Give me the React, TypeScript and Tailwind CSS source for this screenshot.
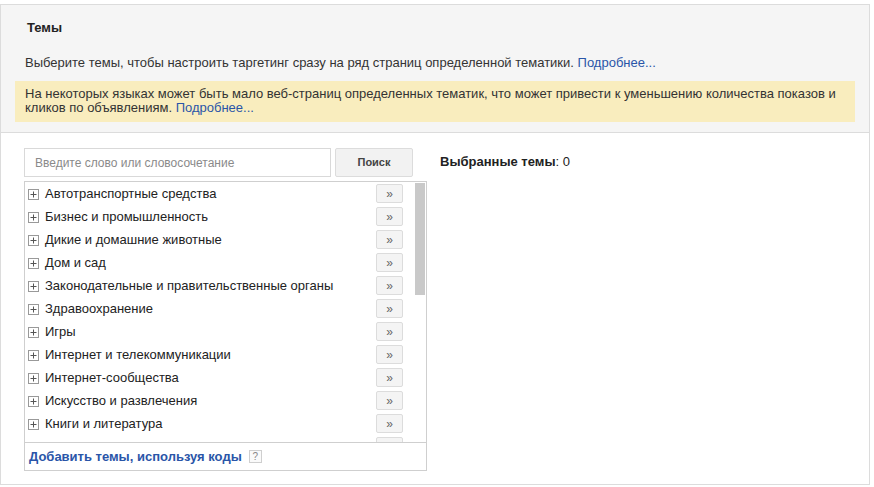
import React from "react";

const topics = [
  "Автотранспортные средства",
  "Бизнес и промышленность",
  "Дикие и домашние животные",
  "Дом и сад",
  "Законодательные и правительственные органы",
  "Здравоохранение",
  "Игры",
  "Интернет и телекоммуникации",
  "Интернет-сообщества",
  "Искусство и развлечения",
  "Книги и литература",
  "Компьютеры и электроника",
];

function PlusBox() {
  return (
    <svg width="11" height="11" viewBox="0 0 11 11" className="shrink-0 mt-[2px]">
      <rect x="0.5" y="0.5" width="10" height="10" fill="#fff" stroke="#999" />
      <path d="M2.5 5.5h6M5.5 2.5v6" stroke="#555" strokeWidth="1" />
    </svg>
  );
}

export default function App() {
  return (
    <div
      className="w-[874px] h-[487px] bg-white text-[13px] text-[#222] pt-[4px]"
      style={{ fontFamily: '"Liberation Sans", Arial, sans-serif' }}
    >
      <div className="w-[870px] h-[481px] border border-[#dcdcdc] flex flex-col">
        <div className="bg-[#f5f5f5] border-b border-[#dcdcdc] h-[128px] shrink-0 pt-[15px] px-[14px]">
          <div className="pl-[12px] font-bold leading-[16px] text-[#222]">Темы</div>
          <div className="pl-[10px] mt-[19px] leading-[16px] text-[#333]">
            Выберите темы, чтобы настроить таргетинг сразу на ряд страниц определенной тематики.{" "}
            <span className="text-[#2a55a8]">Подробнее...</span>
          </div>
          <div className="mt-[10px] bg-[#f9edbe] h-[41px] pl-[10px] pr-[10px] pt-[6px] leading-[14px] text-[#333]">
            На некоторых языках может быть мало веб-страниц определенных тематик, что может привести к уменьшению количества показов и кликов по объявлениям.{" "}
            <span className="text-[#2a55a8]">Подробнее...</span>
          </div>
        </div>
        <div className="flex-1 flex pt-[15px] pl-[23px] gap-[13px]">
          <div className="w-[403px] flex flex-col">
            <div className="flex gap-[4px] h-[29px]">
              <div className="w-[307px] border border-[#d9d9d9] bg-white flex items-center pl-[10px] text-[12px] text-[#8a8a8a]">
                Введите слово или словосочетание
              </div>
              <div className="w-[78px] border border-[#dcdcdc] rounded-[2px] bg-[#f2f2f2] flex items-center justify-center text-[11px] font-bold text-[#444]">
                Поиск
              </div>
            </div>
            <div className="mt-[4px] h-[290px] border border-[#cfcfcf] flex flex-col">
              <div className="h-[261px] flex overflow-hidden border-b border-[#cfcfcf]">
                <div className="flex-1 flex flex-col overflow-hidden">
                  {topics.map((t) => (
                    <div key={t} className="h-[23px] shrink-0 flex items-center pl-[3px] pr-[12px]">
                      <PlusBox />
                      <span className="ml-[6px] flex-1 leading-[16px] text-[#222]">{t}</span>
                      <div className="w-[27px] h-[19px] border border-[#dcdcdc] rounded-[2px] bg-[#f4f4f4] flex items-center justify-center text-[12px] text-[#666] leading-none">
                        »
                      </div>
                    </div>
                  ))}
                </div>
                <div className="w-[11px] shrink-0 bg-white pt-[1px]">
                  <div className="w-[10px] h-[112px] bg-[#c9c9c9]" />
                </div>
              </div>
              <div className="flex-1 flex items-center pl-[4px] gap-[7px]">
                <span className="font-bold text-[#2a55a8] leading-[16px]">Добавить темы, используя коды</span>
                <span className="w-[13px] h-[13px] border border-[#cfcfcf] bg-[#fafafa] text-[10px] text-[#888] flex items-center justify-center leading-none">
                  ?
                </span>
              </div>
            </div>
          </div>
          <div className="pt-[6px] leading-[16px] text-[#222]">
            <span className="font-bold">Выбранные темы</span>: 0
          </div>
        </div>
      </div>
    </div>
  );
}
